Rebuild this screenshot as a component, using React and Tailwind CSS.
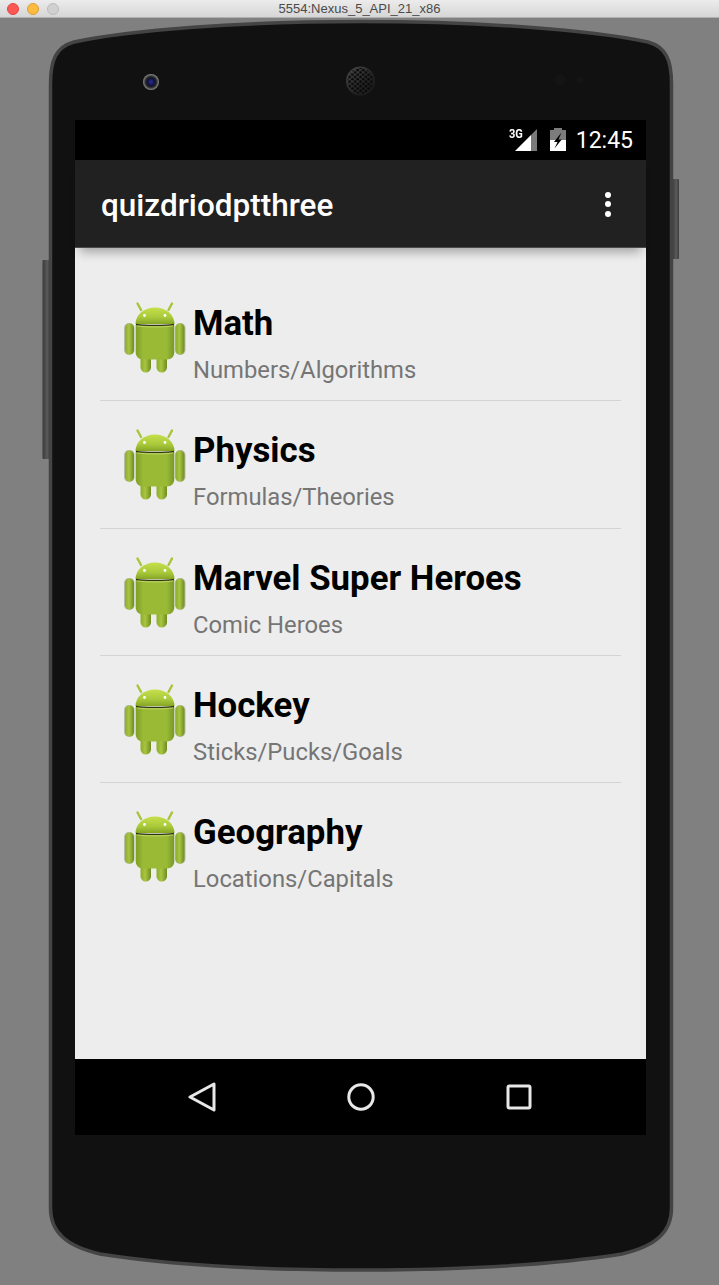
import React from "react";

const TOPICS = [
  { title: "Math", sub: "Numbers/Algorithms" },
  { title: "Physics", sub: "Formulas/Theories" },
  { title: "Marvel Super Heroes", sub: "Comic Heroes" },
  { title: "Hockey", sub: "Sticks/Pucks/Goals" },
  { title: "Geography", sub: "Locations/Capitals" },
];

const AndroidIcon = () => (
  <svg width="70" height="85" viewBox="0 0 70 85" className="shrink-0">
    <defs>
      <linearGradient id="droidHead" x1="0" y1="0" x2="0" y2="1">
        <stop offset="0" stopColor="#c6df4c" />
        <stop offset="0.6" stopColor="#a9c93a" />
        <stop offset="1" stopColor="#86a626" />
      </linearGradient>
      <linearGradient id="droidBody" x1="0" y1="0" x2="1" y2="0">
        <stop offset="0" stopColor="#7f9f26" />
        <stop offset="0.2" stopColor="#9aba36" />
        <stop offset="0.8" stopColor="#9aba36" />
        <stop offset="1" stopColor="#779628" />
      </linearGradient>
      <linearGradient id="droidArm" x1="0" y1="0" x2="1" y2="0">
        <stop offset="0" stopColor="#8dac2e" />
        <stop offset="0.45" stopColor="#a8c540" />
        <stop offset="1" stopColor="#6f8c22" />
      </linearGradient>
      <filter id="droidSoft" x="-10%" y="-10%" width="120%" height="120%">
        <feGaussianBlur stdDeviation="0.45" />
      </filter>
    </defs>
    <g filter="url(#droidSoft)">
      <rect x="4" y="28" width="10.5" height="32" rx="5" fill="#55622e" opacity="0.35" />
      <rect x="55" y="28" width="10.5" height="32" rx="5" fill="#55622e" opacity="0.35" />
      <path d="M21 15 L17.5 8.5" stroke="#a8c43a" strokeWidth="2.4" strokeLinecap="round" />
      <path d="M48.5 15 L52 8.5" stroke="#a8c43a" strokeWidth="2.4" strokeLinecap="round" />
      <rect x="5" y="28.5" width="9" height="31" rx="4.5" fill="url(#droidArm)" />
      <rect x="55.5" y="28.5" width="9" height="31" rx="4.5" fill="url(#droidArm)" />
      <rect x="20.5" y="58" width="10.5" height="19.5" rx="5.2" fill="url(#droidArm)" />
      <rect x="36.5" y="58" width="10.5" height="19.5" rx="5.2" fill="url(#droidArm)" />
      <path d="M15.5 29 A19.5 16.5 0 0 1 54.5 29 Z" fill="url(#droidHead)" />
      <path d="M15.7 30 L54.3 30 L54.3 57 C54.3 61.5 51.5 64.5 47 64.5 L23 64.5 C18.5 64.5 15.7 61.5 15.7 57 Z" fill="url(#droidBody)" />
      <path d="M16 29.3 C24 30.6 46 30.6 54 29.3" stroke="#2c340e" strokeWidth="1.2" fill="none" />
      <path d="M17 31 C24 32.2 46 32.2 53 31" stroke="#cfe07a" strokeWidth="0.7" fill="none" />
    </g>
    <circle cx="24.5" cy="20.5" r="1.4" fill="#ffffff" />
    <circle cx="45" cy="20.5" r="1.4" fill="#ffffff" />
  </svg>
);

const PhoneBody = () => (
  <svg width="719" height="1285" viewBox="0 0 719 1285" className="absolute left-0 top-0">
    <defs>
      <linearGradient id="sideKey" x1="0" y1="0" x2="1" y2="0">
        <stop offset="0" stopColor="#3a3a3a" />
        <stop offset="0.6" stopColor="#5a5a5a" />
        <stop offset="1" stopColor="#3c3c3c" />
      </linearGradient>
      <radialGradient id="lens">
        <stop offset="0" stopColor="#2a2f9a" />
        <stop offset="0.45" stopColor="#10123c" />
        <stop offset="0.65" stopColor="#222222" />
        <stop offset="1" stopColor="#8a8a8a" />
      </radialGradient>
      <linearGradient id="grilleRim" x1="0" y1="0" x2="1" y2="1">
        <stop offset="0" stopColor="#4a4a4a" />
        <stop offset="0.6" stopColor="#242424" />
        <stop offset="1" stopColor="#161616" />
      </linearGradient>
      <pattern id="grille" width="5.4" height="4.6" patternUnits="userSpaceOnUse">
        <circle cx="1.4" cy="1.1" r="1.3" fill="#070707" />
        <circle cx="4.1" cy="3.4" r="1.3" fill="#070707" />
      </pattern>
    </defs>
    <rect x="42.5" y="260" width="8" height="199" rx="1" fill="url(#sideKey)" />
    <rect x="672" y="179" width="7" height="80" rx="1" fill="url(#sideKey)" />
    <path
      d="M50.5 84 C50.5 60 56 47 74 42 C130 30 240 21.5 361 21.5 C482 21.5 592 30 648 42 C666 47 671.5 60 671.5 84 L671.5 1208 C671.5 1232 656 1246 622 1254 C552 1265 462 1270 361 1270 C260 1270 170 1265 100 1254 C66 1246 50.5 1232 50.5 1208 Z"
      fill="#111111"
      stroke="#444444"
      strokeWidth="3.5"
    />
    <circle cx="151" cy="82" r="8" fill="url(#lens)" />
    <circle cx="360.5" cy="81" r="14.5" fill="url(#grilleRim)" />
    <circle cx="360.5" cy="81" r="13" fill="url(#grille)" />
    <circle cx="560" cy="80" r="6" fill="#161413" />
    <circle cx="580" cy="80" r="3.5" fill="#161413" />
  </svg>
);

const StatusBar = () => (
  <div className="flex h-10 shrink-0 items-center justify-end bg-black pr-[13px]">
    <div className="relative mr-[13px] h-[24px] w-[28px]">
      <svg width="28" height="24" viewBox="0 0 28 24" className="absolute left-0 top-0">
        <path d="M6 23 L22 7 L22 23 Z" fill="#ffffff" />
        <path d="M22 7 L28 1 L28 23 L22 23 Z" fill="#7a7a7a" />
      </svg>
      <span className="absolute -top-[1px] left-0 origin-left scale-x-[0.85] text-[13px] leading-none font-bold text-white font-['Roboto',sans-serif]">
        3G
      </span>
    </div>
    <svg width="16" height="24" viewBox="0 0 16 24" className="mr-[10px]">
      <path d="M4 0 L12 0 L12 2 L16 2 L16 12 L0 12 L0 2 L4 2 Z" fill="#7c7c7c" />
      <path d="M0 12 L16 12 L16 23 L0 23 Z" fill="#ffffff" />
      <path d="M11.5 4.5 L4 14 L7.5 14 L4.5 20.5 L11.7 11.5 L8.5 11.5 Z" fill="#000000" />
    </svg>
    <span className="text-[23px] leading-none text-white font-['Roboto',sans-serif]">12:45</span>
  </div>
);

const ActionBar = () => (
  <div className="relative z-10 flex h-[88px] shrink-0 items-center justify-between border-b border-[#4a4a4a] bg-[#212121] pl-[26px] pr-[35px] shadow-[0_9px_10px_-5px_rgba(0,0,0,0.32)]">
    <span className="mt-[4px] text-[31.5px] font-medium text-white font-['Roboto',sans-serif]">quizdriodptthree</span>
    <div className="mt-[1px] flex flex-col gap-[3.5px]">
      <span className="h-[6px] w-[6px] rounded-full bg-white" />
      <span className="h-[6px] w-[6px] rounded-full bg-white" />
      <span className="h-[6px] w-[6px] rounded-full bg-white" />
    </div>
  </div>
);

const TopicRow = ({ topic, last }) => (
  <div className={`flex h-[127.3px] pl-[20px] pt-[21px] ${last ? "" : "border-b border-[#d4d4d4]"}`}>
    <AndroidIcon />
    <div className="ml-[3px] flex flex-col font-['Roboto',sans-serif]">
      <span className="mt-[5px] text-[34.8px] leading-[46px] font-bold text-black">{topic.title}</span>
      <span className="mt-[10px] text-[23.8px] leading-[28px] text-[#757575]">{topic.sub}</span>
    </div>
  </div>
);

const NavBar = () => (
  <div className="flex h-[76px] shrink-0 items-center justify-between bg-black pl-[113px] pr-[114px]">
    <svg width="28" height="30" viewBox="0 0 28 30">
      <path d="M26 2 L26 28 L2 15 Z" fill="none" stroke="#e8e8e8" strokeWidth="3" strokeLinejoin="round" />
    </svg>
    <svg width="28" height="28" viewBox="0 0 28 28">
      <circle cx="14" cy="14" r="12.2" fill="none" stroke="#e8e8e8" strokeWidth="3" />
    </svg>
    <svg width="26" height="26" viewBox="0 0 26 26">
      <rect x="2" y="2" width="22" height="22" rx="1.5" fill="none" stroke="#e8e8e8" strokeWidth="3" />
    </svg>
  </div>
);

export default function App() {
  return (
    <div className="relative h-[1285px] w-[719px] overflow-hidden bg-[#808080]">
      <PhoneBody />
      <div className="relative flex h-[18px] items-center border-b border-[#b0b0b0] bg-gradient-to-b from-[#ececec] to-[#d6d6d6] px-[7px]">
        <div className="flex gap-[8px]">
          <span className="h-[12px] w-[12px] rounded-full border border-[#df4744] bg-[#fc5753]" />
          <span className="h-[12px] w-[12px] rounded-full border border-[#de9f34] bg-[#fdbc40]" />
          <span className="h-[12px] w-[12px] rounded-full border border-[#bcbcbc] bg-[#d0d0d0]" />
        </div>
        <span className="absolute inset-x-0 text-center text-[13px] leading-none text-[#4a4a4a] font-['Liberation_Sans',sans-serif]">
          5554:Nexus_5_API_21_x86
        </span>
      </div>
      <div className="relative ml-[75px] mt-[102px] flex h-[1015px] w-[571px] flex-col">
        <StatusBar />
        <ActionBar />
        <div className="flex-1 bg-[#ededed] px-[25px] pt-[26px]">
          {TOPICS.map((topic, i) => (
            <TopicRow key={topic.title} topic={topic} last={i === TOPICS.length - 1} />
          ))}
        </div>
        <NavBar />
      </div>
    </div>
  );
}
